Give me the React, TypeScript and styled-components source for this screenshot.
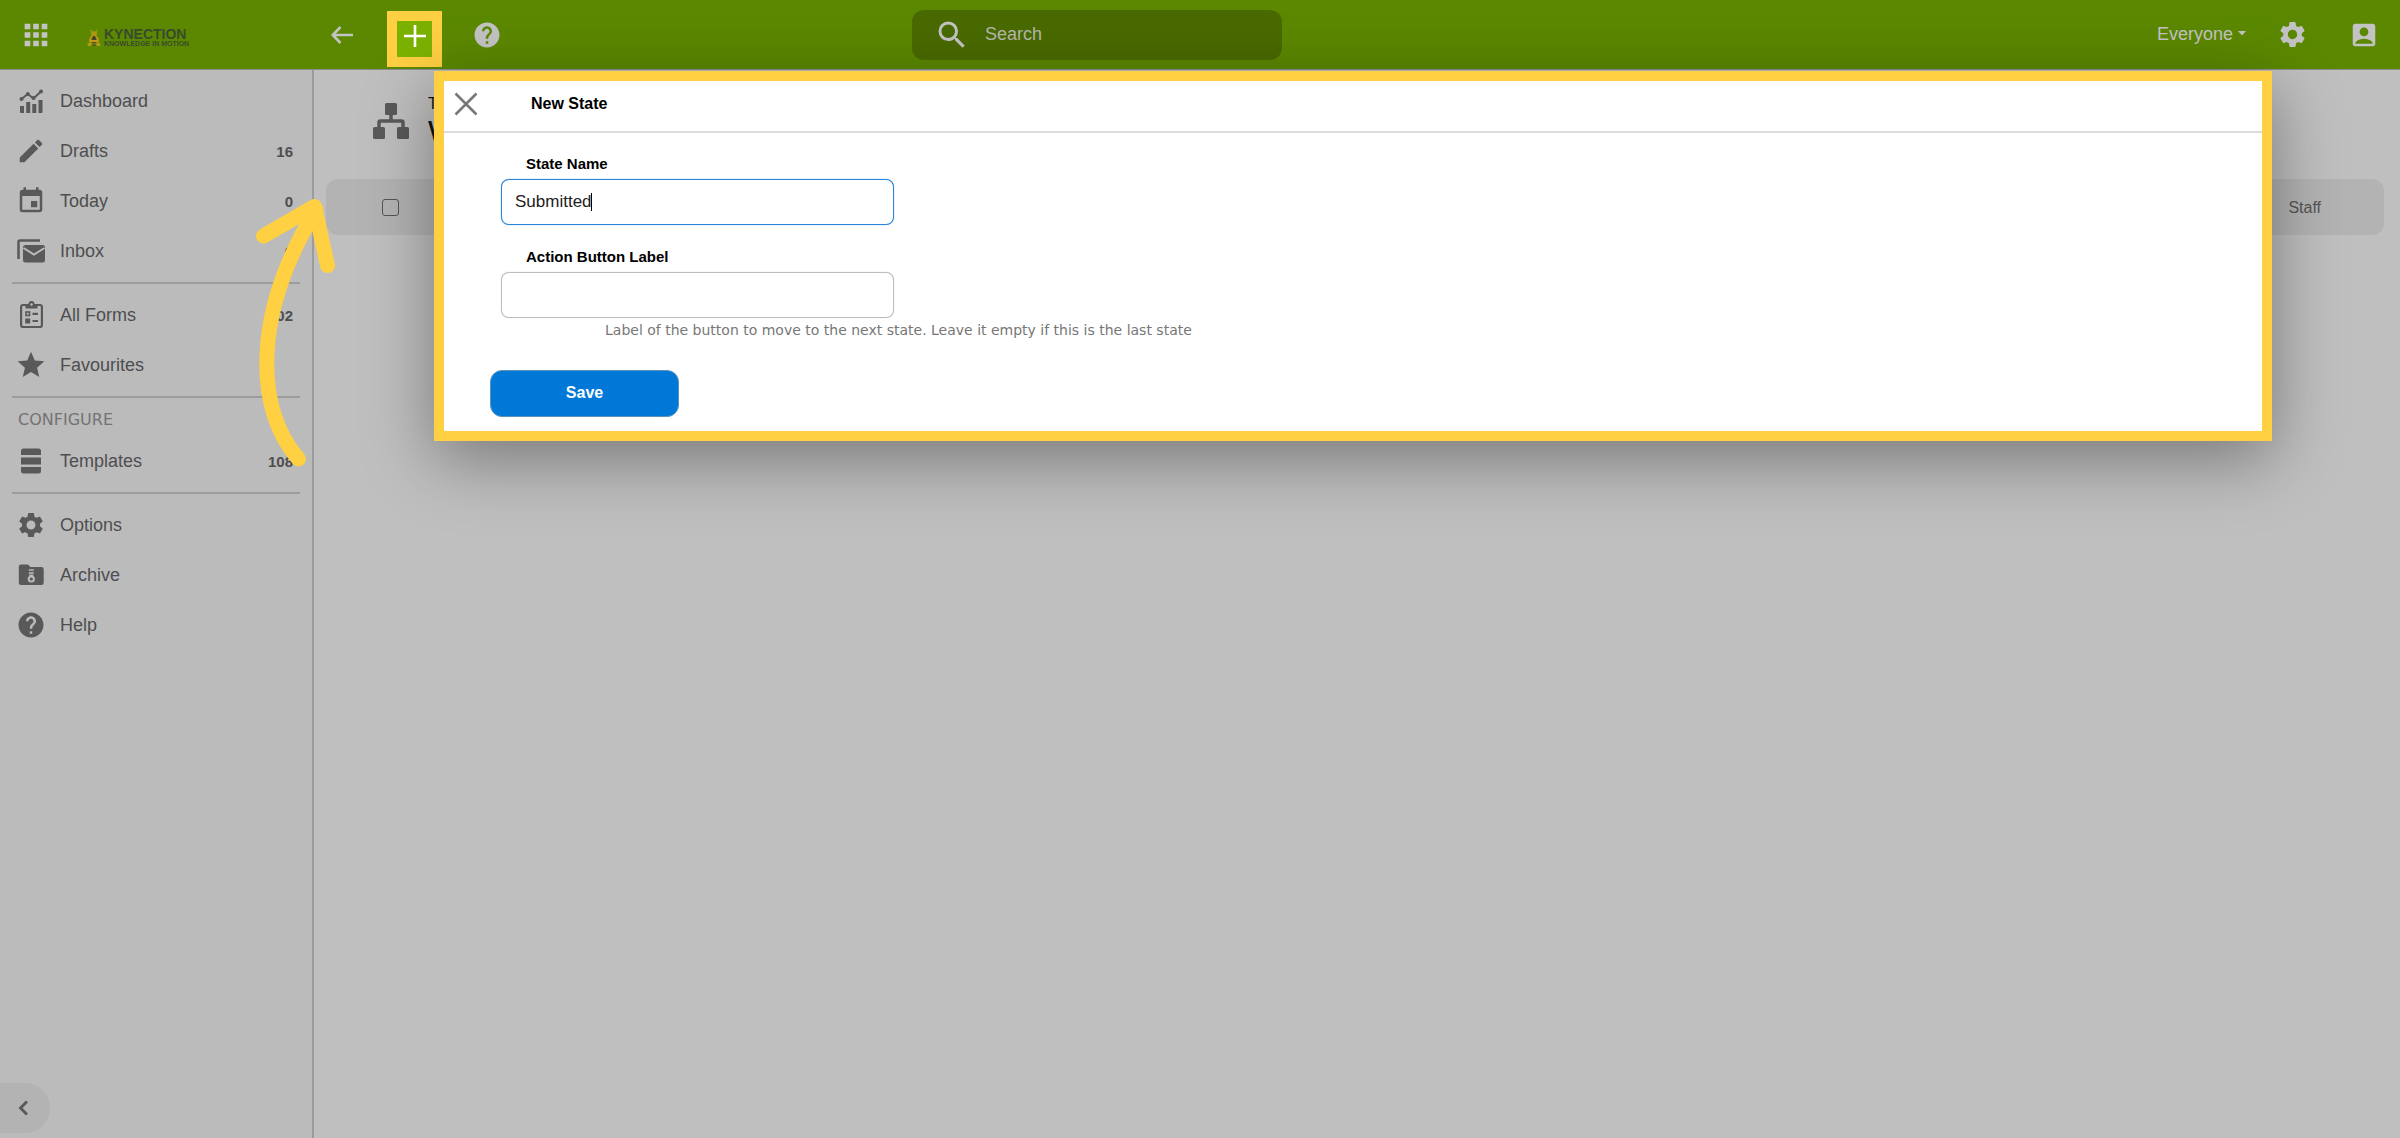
import React from "react";
import styled, { createGlobalStyle } from "styled-components";
import {
  MdAccountBox,
  MdApps,
  MdEdit,
  MdEvent,
  MdHelp,
  MdSearch,
  MdSettings,
  MdStar,
} from "react-icons/md";

const color = {
  green: "#5b8800",
  greenDark: "#496a00",
  greenLit: "#7bb200",
  yellow: "#ffd042",
  sidebar: "#bbbbbb",
  main: "#bfbfbf",
  band: "#b3b3b3",
  line: "#9c9c9f",
  icon: "#595959",
  text: "#4e4e50",
  pale: "#c3c3c3",
  blue: "#0078d8",
};

const sans = `"Liberation Sans", Arial, sans-serif`;
const wide = `"DejaVu Sans", Verdana, sans-serif`;

const GlobalStyle = createGlobalStyle`
  * { box-sizing: border-box; }
  body { margin: 0; font-family: ${sans}; background: ${color.main}; }
  button, input, select { font-family: inherit; }
  svg { display: block; flex: none; }
`;

const Page = styled.div`
  position: relative;
  display: flex;
  flex-direction: column;
  min-height: 100vh;
`;

const Header = styled.header`
  display: grid;
  grid-template-columns: 38% minmax(200px, 15.4%) 1fr;
  align-items: center;
  height: 70px;
  background: ${color.green};
  border-bottom: 1px solid #8c8c92;
  color: ${color.pale};
`;

const HeaderStart = styled.div`
  display: flex;
  align-items: center;
`;

const Brand = styled.div`
  display: flex;
  align-items: center;
  width: 313px;
  padding-left: 16px;
  gap: 31px;
`;

const BarButton = styled.button<{ $wide?: boolean }>`
  display: flex;
  align-items: center;
  justify-content: center;
  width: ${(p) => (p.$wide ? 58 : 40)}px;
  height: 40px;
  padding: 0;
  border: 0;
  background: none;
  color: inherit;
`;

const Logo = styled.a`
  display: flex;
  align-items: center;
  gap: 3px;
  margin-top: 6px;
  color: #3a4a2c;
  text-decoration: none;
`;

const LogoText = styled.span`
  display: flex;
  flex-direction: column;
  font-weight: 700;
`;

const LogoName = styled.span`
  font-size: 14px;
  line-height: 12px;
`;

const LogoTag = styled.span`
  font-size: 7px;
  line-height: 7px;
  white-space: nowrap;
`;

const Nav = styled.nav`
  display: flex;
  align-items: center;
  gap: 16px;
`;

const AddButton = styled.button`
  display: flex;
  align-items: center;
  justify-content: center;
  width: 55px;
  height: 56px;
  margin-top: 8px;
  padding: 0 0 6px;
  border: 10px solid ${color.yellow};
  background: ${color.greenLit};
  color: #fff;
`;

const SearchBox = styled.label`
  display: flex;
  align-items: center;
  gap: 15px;
  height: 50px;
  padding: 0 22px;
  border-radius: 12px;
  background: ${color.greenDark};
`;

const SearchInput = styled.input`
  flex: 1;
  min-width: 0;
  padding: 0;
  border: 0;
  outline: 0;
  background: none;
  color: ${color.pale};
  font-size: 18px;
  &::placeholder { color: #b4b8ac; opacity: 1; }
`;

const HeaderEnd = styled.div`
  display: flex;
  align-items: center;
  justify-content: flex-end;
  gap: 32px;
  padding-right: 16px;
`;

const Audience = styled.label`
  display: flex;
  align-items: center;
  gap: 4px;
  margin-right: -6px;
  padding-bottom: 2px;
`;

const AudienceSelect = styled.select`
  appearance: none;
  padding: 0;
  border: 0;
  background: none;
  color: inherit;
  font-size: 18px;
`;

const Body = styled.div`
  display: flex;
  flex: 1;
`;

const Sidebar = styled.aside`
  display: flex;
  flex-direction: column;
  width: 314px;
  padding: 6px 0 5px;
  border-right: 2px solid ${color.line};
  background: ${color.sidebar};
`;

const NavItem = styled.a`
  display: grid;
  grid-template-columns: 30px 1fr auto;
  align-items: center;
  column-gap: 14px;
  height: 50px;
  padding: 0 19px 0 16px;
  color: ${color.text};
  font-size: 18px;
  text-decoration: none;
  svg { color: ${color.icon}; justify-self: center; }
`;

const Count = styled.span`
  font-size: 15px;
  font-weight: 700;
`;

const Divider = styled.hr`
  width: auto;
  height: 2px;
  margin: 6px 12px;
  border: 0;
  background: ${color.line};
`;

const GroupTitle = styled.h2`
  margin: 0;
  padding-left: 18px;
  color: #737373;
  font: 400 16px/32px ${wide};
`;

const Collapse = styled.button`
  display: flex;
  align-items: center;
  width: 50px;
  height: 50px;
  margin-top: auto;
  padding: 0 0 0 18px;
  border: 0;
  border-radius: 0 25px 25px 0;
  background: ${color.band};
  color: ${color.icon};
`;

const Main = styled.main`
  flex: 1;
  padding: 21px 16px 0 12px;
`;

const Title = styled.div`
  display: flex;
  align-items: flex-start;
  gap: 19px;
  height: 88px;
  padding: 12px 0 0 47px;
`;

const TitleText = styled.div`
  display: flex;
  flex-direction: column;
  margin-top: -9px;
  color: #111;
`;

const Kicker = styled.span`
  font-size: 16px;
  line-height: 20px;
`;

const Heading = styled.h1`
  margin: 0;
  font-size: 32px;
  font-weight: 400;
  line-height: 36px;
`;

const Table = styled.table`
  width: 100%;
  border-collapse: separate;
  border-spacing: 0;
`;

const HeadCell = styled.th<{ $end?: boolean }>`
  height: 56px;
  padding: ${(p) => (p.$end ? "2px 63px 0 0" : "0 0 0 56px")};
  border-radius: ${(p) => (p.$end ? "0 12px 12px 0" : "12px 0 0 12px")};
  background: ${color.band};
  color: #555;
  font-size: 16px;
  font-weight: 400;
  text-align: ${(p) => (p.$end ? "right" : "left")};
`;

const Tick = styled.input`
  display: block;
  appearance: none;
  width: 17px;
  height: 17px;
  margin: 0;
  border: 1px solid #555;
  border-radius: 3px;
`;

const Overlay = styled.div`
  position: absolute;
  inset: 71px 128px auto 434px;
`;

const Dialog = styled.section`
  border: 10px solid ${color.yellow};
  background: #fff;
  box-shadow: 0 18px 64px rgba(0, 0, 0, 0.37);
`;

const DialogHead = styled.div`
  display: flex;
  align-items: center;
  gap: 45px;
  height: 52px;
  padding: 0 2px 4px;
  border-bottom: 2px solid #dcdcdc;
`;

const CloseButton = styled(BarButton)`
  color: #777;
`;

const DialogTitle = styled.h2`
  margin: 0;
  color: #000;
  font-size: 16px;
`;

const Form = styled.form`
  display: flex;
  flex-direction: column;
  padding: 21px 46px 14px;
`;

const Field = styled.div`
  display: flex;
  flex-direction: column;
  align-items: flex-start;
  padding-left: 11px;
  & + & { margin-top: 22px; }
`;

const Label = styled.label`
  padding-left: 25px;
  color: #000;
  font-size: 15px;
  font-weight: 700;
  line-height: 20px;
`;

const InputWrap = styled.div`
  position: relative;
  width: 393px;
  max-width: 100%;
  margin-top: 5px;
`;

const TextInput = styled.input<{ $active?: boolean }>`
  display: block;
  width: 100%;
  height: 46px;
  padding: 0 13px;
  border: ${(p) => (p.$active ? "1px solid #2a86d8" : "1px solid #bdbdc4")};
  border-radius: 8px;
  outline: 0;
  box-shadow: 0 0 1px ${(p) => (p.$active ? "#2a86d8" : "#bdbdc4")};
  color: #222;
  font-size: 17px;
`;

const Caret = styled.span`
  position: absolute;
  top: 14px;
  left: 90px;
  width: 1px;
  height: 18px;
  background: #000;
`;

const Hint = styled.p`
  margin: 2px 0 0 104px;
  color: #777;
  font: 400 14px/20px ${wide};
`;

const SaveButton = styled.button`
  width: 189px;
  height: 47px;
  margin-top: 30px;
  padding: 0 0 2px;
  border: 1px solid #5b93bd;
  border-radius: 12px;
  background: ${color.blue};
  color: #fff;
  font-size: 16px;
  font-weight: 700;
`;

const Pointer = styled.svg`
  position: absolute;
  top: 190px;
  left: 250px;
  pointer-events: none;
`;

const BeeMark = () => (
  <svg width="14" height="18" viewBox="0 0 14 18">
    <path d="M3 1 7 4 11 1" fill="none" stroke="#8f9a10" strokeWidth="1.400" />
    <ellipse cx="7" cy="4.500" rx="3" ry="2.200" fill="#a89a10" />
    <path d="M7 5C9.500 6 12.200 9.500 12 12.500L10 14.500H4L2 12.500C1.800 9.500 4.500 6 7 5Z" fill="#c29a12" />
    <path d="M7 6.500C8.500 7.500 9.500 9 9.500 11h-5C4.500 9 5.500 7.500 7 6.500Z" fill="#45442a" />
    <path d="M.5 14.500 4.500 13v4H.8ZM13.500 14.500 9.500 13v4h3.700Z" fill="#b09a18" />
    <path d="M4.500 13h5v1.200h-5zM5.500 15.500h3v1.500h-3z" fill="#55501f" />
  </svg>
);

const BackIcon = () => (
  <svg width="24" height="20" viewBox="0 0 24 20" fill="none" stroke="currentColor" strokeWidth="2.600">
    <path d="M23 10H3M10.500 2 2.800 10l7.700 8" />
  </svg>
);

const PlusIcon = () => (
  <svg width="24" height="24" viewBox="0 0 24 24" fill="none" stroke="currentColor" strokeWidth="2.600">
    <path d="M12 1v22M1 12h22" />
  </svg>
);

const CloseIcon = () => (
  <svg width="24" height="24" viewBox="0 0 24 24" fill="none" stroke="currentColor" strokeWidth="2.600">
    <path d="M1.500 1.500 22.500 22.500M22.500 1.500 1.500 22.500" />
  </svg>
);

const CaretDown = () => (
  <svg width="8" height="5" viewBox="0 0 8 5" fill="currentColor">
    <path d="M0 0h8L4 4.500Z" />
  </svg>
);

const ChevronLeft = () => (
  <svg width="11" height="16" viewBox="0 0 11 16" fill="none" stroke="currentColor" strokeWidth="2.800">
    <path d="M9 1.500 2.500 8 9 14.500" />
  </svg>
);

const DashboardIcon = () => (
  <svg width="30" height="30" viewBox="0 0 30 30" fill="currentColor">
    <path d="M4 20h4v7H5a1 1 0 0 1-1-1ZM10.200 16h4v11h-4ZM16.300 18h4v9h-4ZM22.500 14h4v12a1 1 0 0 1-1 1h-3Z" />
    <path d="M5.500 13 11.800 8 17.500 12.500 25 5.500" fill="none" stroke="currentColor" strokeWidth="2" />
    <circle cx="5.500" cy="13" r="2" />
    <circle cx="11.800" cy="8" r="2" />
    <circle cx="17.500" cy="12" r="2" />
    <circle cx="25" cy="5.500" r="2" />
  </svg>
);

const InboxIcon = () => (
  <svg width="30" height="30" viewBox="0 0 30 30" fill="currentColor">
    <path d="M2.500 23V6a1.500 1.500 0 0 1 1.500-1.500H24" fill="none" stroke="currentColor" strokeWidth="2.500" />
    <rect x="7" y="9" width="22" height="17.500" rx="2.500" />
    <path d="M7.500 12 18 18.500 28.500 12" fill="none" stroke={color.sidebar} strokeWidth="2" />
  </svg>
);

const FormsIcon = () => (
  <svg width="30" height="30" viewBox="0 0 30 30" fill="none" stroke="currentColor" strokeWidth="2.200">
    <rect x="5.100" y="5" width="20.800" height="22" rx="2" />
    <path d="M9.500 4h3a3 3 0 0 1 6 0h3v4.500h-12Z" fill="currentColor" stroke="none" />
    <circle cx="15.500" cy="4.500" r="1.200" fill={color.sidebar} stroke="none" />
    <rect x="10" y="12" width="3.500" height="3.500" strokeWidth="1.600" />
    <rect x="9.200" y="18.500" width="5" height="5" fill="currentColor" stroke="none" />
    <path d="M16.500 13.800h5.500M16.500 21h5.500" />
  </svg>
);

const StackIcon = () => (
  <svg width="30" height="30" viewBox="0 0 30 30" fill="currentColor">
    <path d="M5 9V5a2.500 2.500 0 0 1 2.500-2.500h15A2.500 2.500 0 0 1 25 5v4ZM5 11.500h20v7H5ZM5 21h20v4a2.500 2.500 0 0 1-2.500 2.500h-15A2.500 2.500 0 0 1 5 25Z" />
  </svg>
);

const ZipFolderIcon = () => (
  <svg width="30" height="30" viewBox="0 0 30 30" fill="currentColor">
    <path d="M5 4.500h7l2.500 2.500H25.500A2.200 2.200 0 0 1 27.700 9.200V22.800A2.200 2.200 0 0 1 25.500 25H5A2.200 2.200 0 0 1 2.800 22.800V6.700A2.200 2.200 0 0 1 5 4.500Z" />
    <path d="M12.800 10h5M12.800 13h5" stroke={color.sidebar} strokeWidth="1.600" />
    <path d="M13.300 14.500h4v2h-4z" fill={color.sidebar} />
    <circle cx="15.300" cy="19" r="2.600" fill="none" stroke={color.sidebar} strokeWidth="2" />
  </svg>
);

const HierarchyIcon = () => (
  <svg width="36" height="36" viewBox="0 0 36 36" fill={color.icon}>
    <rect x="12" y="0" width="12" height="12" rx="1.500" />
    <rect x="0" y="24" width="12" height="12" rx="1.500" />
    <rect x="24" y="24" width="12" height="12" rx="1.500" />
    <path d="M18 10v8M6 26v-6.500a1.500 1.500 0 0 1 1.500-1.500h21a1.500 1.500 0 0 1 1.500 1.500V26" fill="none" stroke={color.icon} strokeWidth="3.500" />
  </svg>
);

type Item = { label: string; icon: React.ReactNode; count?: string };

const inboxItems: Item[] = [
  { label: "Dashboard", icon: <DashboardIcon /> },
  { label: "Drafts", icon: <MdEdit size={30} />, count: "16" },
  { label: "Today", icon: <MdEvent size={30} />, count: "0" },
  { label: "Inbox", icon: <InboxIcon />, count: "0" },
];

const formItems: Item[] = [
  { label: "All Forms", icon: <FormsIcon />, count: "02" },
  { label: "Favourites", icon: <MdStar size={32} /> },
];

const configureItems: Item[] = [{ label: "Templates", icon: <StackIcon />, count: "108" }];

const supportItems: Item[] = [
  { label: "Options", icon: <MdSettings size={30} /> },
  { label: "Archive", icon: <ZipFolderIcon /> },
  { label: "Help", icon: <MdHelp size={30} /> },
];

const NavGroup = ({ items }: { items: Item[] }) => (
  <>
    {items.map((item) => (
      <NavItem href="#" key={item.label}>
        {item.icon}
        <span>{item.label}</span>
        {item.count && <Count>{item.count}</Count>}
      </NavItem>
    ))}
  </>
);

export default function App() {
  return (
    <Page>
      <GlobalStyle />
      <Header>
        <HeaderStart>
          <Brand>
            <BarButton aria-label="Apps">
              <MdApps size={34} />
            </BarButton>
            <Logo href="#">
              <BeeMark />
              <LogoText>
                <LogoName>KYNECTION</LogoName>
                <LogoTag>KNOWLEDGE IN MOTION</LogoTag>
              </LogoText>
            </Logo>
          </Brand>
          <Nav>
            <BarButton $wide aria-label="Back">
              <BackIcon />
            </BarButton>
            <AddButton aria-label="Add">
              <PlusIcon />
            </AddButton>
            <BarButton $wide aria-label="Help">
              <MdHelp size={30} />
            </BarButton>
          </Nav>
        </HeaderStart>
        <SearchBox>
          <MdSearch size={36} />
          <SearchInput type="search" placeholder="Search" aria-label="Search" />
        </SearchBox>
        <HeaderEnd>
          <Audience>
            <AudienceSelect aria-label="Audience">
              <option>Everyone</option>
            </AudienceSelect>
            <CaretDown />
          </Audience>
          <BarButton aria-label="Settings">
            <MdSettings size={31} />
          </BarButton>
          <BarButton aria-label="Account">
            <MdAccountBox size={30} />
          </BarButton>
        </HeaderEnd>
      </Header>

      <Body>
        <Sidebar>
          <NavGroup items={inboxItems} />
          <Divider />
          <NavGroup items={formItems} />
          <Divider />
          <GroupTitle>CONFIGURE</GroupTitle>
          <NavGroup items={configureItems} />
          <Divider />
          <NavGroup items={supportItems} />
          <Collapse aria-label="Collapse menu">
            <ChevronLeft />
          </Collapse>
        </Sidebar>
        <Main>
          <Title>
            <HierarchyIcon />
            <TitleText>
              <Kicker>T</Kicker>
              <Heading>W</Heading>
            </TitleText>
          </Title>
          <Table>
            <thead>
              <tr>
                <HeadCell>
                  <Tick type="checkbox" aria-label="Select all" />
                </HeadCell>
                <HeadCell $end>Staff</HeadCell>
              </tr>
            </thead>
          </Table>
        </Main>
      </Body>

      <Overlay>
        <Dialog role="dialog" aria-labelledby="dialog-title">
          <DialogHead>
            <CloseButton aria-label="Close">
              <CloseIcon />
            </CloseButton>
            <DialogTitle id="dialog-title">New State</DialogTitle>
          </DialogHead>
          <Form onSubmit={(e) => e.preventDefault()}>
            <Field>
              <Label htmlFor="state-name">State Name</Label>
              <InputWrap>
                <TextInput id="state-name" $active defaultValue="Submitted" />
                <Caret />
              </InputWrap>
            </Field>
            <Field>
              <Label htmlFor="action-label">Action Button Label</Label>
              <InputWrap>
                <TextInput id="action-label" aria-describedby="action-hint" />
              </InputWrap>
              <Hint id="action-hint">
                Label of the button to move to the next state. Leave it empty if this is the last state
              </Hint>
            </Field>
            <SaveButton type="submit">Save</SaveButton>
          </Form>
        </Dialog>
      </Overlay>

      <Pointer
        width="100"
        height="290"
        viewBox="250 190 100 290"
        fill="none"
        stroke={color.yellow}
        strokeWidth="15"
        strokeLinecap="round"
        strokeLinejoin="round"
        aria-hidden="true"
      >
        <path d="M298.500 459C255 410 252 314 316 210" />
        <path d="M263.500 236 314.500 206.500 327.500 265.500" />
      </Pointer>
    </Page>
  );
}
